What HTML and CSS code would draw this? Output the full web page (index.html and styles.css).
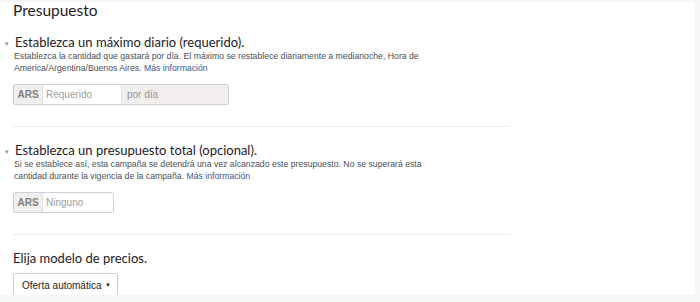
FILE: index.html
```html
<!DOCTYPE html>
<html>
<head>
    <title>Presupuesto</title>
    <meta charset="UTF-8">
    <link rel="stylesheet" href="styles.css">
</head>
<body>
    <div class="panel">
        <h1 class="title">Presupuesto</h1>

        <!-- Máximo diario -->
        <div class="section first">
            <h2 class="heading"><span class="caret">&#9662;</span>Establezca un máximo diario (requerido).</h2>
            <p class="desc">Establezca la cantidad que gastará por día. El máximo se restablece diariamente a medianoche, Hora de America/Argentina/Buenos Aires. <a href="#" class="link">Más información</a></p>
            <div class="input-group">
                <span class="addon">ARS</span>
                <input type="text" class="field" placeholder="Requerido">
                <span class="suffix">por día</span>
            </div>
        </div>

        <!-- Presupuesto total -->
        <div class="section">
            <h2 class="heading"><span class="caret">&#9662;</span>Establezca un presupuesto total (opcional).</h2>
            <p class="desc">Si se establece así, esta campaña se detendrá una vez alcanzado este presupuesto. No se superará esta cantidad durante la vigencia de la campaña. <a href="#" class="link">Más información</a></p>
            <div class="input-group">
                <span class="addon">ARS</span>
                <input type="text" class="field short" placeholder="Ninguno">
            </div>
        </div>

        <!-- Modelo de precios -->
        <div class="section last">
            <h2 class="heading plain">Elija modelo de precios.</h2>
            <div class="select">
                <span>Oferta automática</span>
                <span class="arrow">&#9660;</span>
            </div>
        </div>
    </div>
</body>
</html>
```

FILE: styles.css
```css
body {
    margin: 0;
    background-color: #f5f6f7;
    font-family: "Liberation Sans", Arial, sans-serif;
    color: #1d2129;
}
.panel {
    width: 695px;
    height: 293px;
    margin-top: 2px;
    background-color: #fff;
    overflow: hidden;
    padding-left: 13px;
    box-sizing: border-box;
}
.title {
    margin: 0;
    font-family: Lato, sans-serif;
    font-size: 15.5px;
    font-weight: 400;
    line-height: 16px;
    color: #1d2129;
}
.section {
    width: 497px;
    border-bottom: 1px solid #e9ebee;
    padding-top: 15px;
    padding-bottom: 21px;
}
.section.first {
    padding-top: 16px;
}
.section.last {
    border-bottom: none;
}
.heading {
    position: relative;
    margin: 0 0 0 2px;
    font-family: Lato, sans-serif;
    font-size: 13px;
    font-weight: 400;
    line-height: 16px;
    color: #1d2129;
}
.heading.plain {
    margin-left: 0;
}
.caret {
    position: absolute;
    left: -10px;
    top: 1px;
    font-size: 7px;
    color: #90949c;
}
.desc {
    width: 428px;
    margin: 0 0 0 1px;
    font-size: 8.7px;
    line-height: 12px;
    color: #4b4f56;
}
.link {
    color: #365899;
    text-decoration: none;
}
.input-group {
    display: inline-flex;
    margin-top: 10px;
    height: 21px;
    border: 1px solid #ccd0d5;
    border-radius: 2px;
    box-sizing: border-box;
    font-size: 10px;
}
.addon {
    display: flex;
    align-items: center;
    width: 28px;
    justify-content: center;
    background-color: #f1eeee;
    border-right: 1px solid #dddfe2;
    font-weight: bold;
    color: #7f7f7f;
}
.field {
    width: 72px;
    border: none;
    padding: 0 3px;
    font-family: "Liberation Sans", Arial, sans-serif;
    font-size: 10px;
    outline: none;
}
.field.short {
    width: 64px;
}
.field::placeholder {
    color: #9d9d9d;
}
.suffix {
    display: flex;
    align-items: center;
    width: 101px;
    padding-left: 5px;
    background-color: #f2eeee;
    border-left: 1px solid #dddfe2;
    color: #90949c;
}
.select {
    display: flex;
    align-items: center;
    justify-content: space-between;
    width: 105px;
    height: 24px;
    margin-top: 7px;
    padding: 0 6px 0 8px;
    box-sizing: border-box;
    border: 1px solid #ccd0d5;
    border-radius: 2px;
    font-size: 10px;
    color: #1d2129;
}
.arrow {
    font-size: 6px;
}
```
